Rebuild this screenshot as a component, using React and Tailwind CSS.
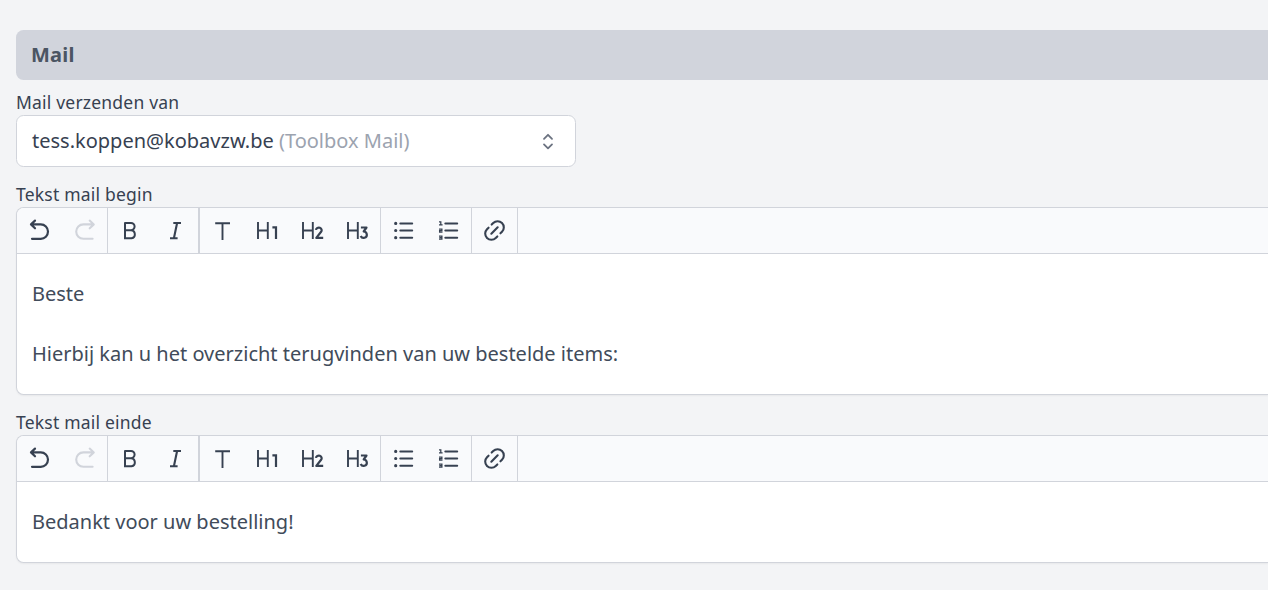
import React from "react";

const icons = {
  undo: (
    <path strokeWidth="2.2" d="M18 12.6 L14 16.4 L18 20.3 M14.2 16.4 H23.8 A7.2 7.2 0 0 1 23.8 30.8 H15" />
  ),
  redo: (
    <path strokeWidth="2.1" d="M27.7 12.6 L31.8 16.4 L27.7 20.3 M31.6 16.4 H21.4 A7.2 7.2 0 0 0 21.4 30.8 H30.6" />
  ),
  bold: (
    <path strokeWidth="2" strokeLinejoin="miter" d="M17 15 H23 A3.6 3.6 0 0 1 23 22.2 H17 M23 22.2 A4.1 4.1 0 0 1 23.6 30.3 H17 V15" />
  ),
  italic: (
    <path strokeWidth="2.1" strokeLinecap="butt" d="M20.3 15 H28 M17 30.2 H24.6 M24.1 15 L20.9 30.2" />
  ),
  text: <path strokeWidth="1.9" strokeLinecap="butt" d="M15.2 15.2 H30 M22.5 15.2 V32" />,
  h1: (
    <>
      <path strokeWidth="1.9" strokeLinecap="butt" d="M13 14 V31 M22.8 14 V31 M13 22.5 H22.8" />
      <path strokeWidth="2.2" strokeLinecap="butt" strokeLinejoin="miter" d="M27.4 19.4 H31 V31" />
    </>
  ),
  h2: (
    <>
      <path strokeWidth="1.9" strokeLinecap="butt" d="M13 14 V31 M22.8 14 V31 M13 22.5 H22.8" />
      <path strokeWidth="2.2" strokeLinecap="butt" d="M25.9 21.9 A2.9 2.6 0 1 1 31.1 23.8 L26.3 29.9 H33.2" />
    </>
  ),
  h3: (
    <>
      <path strokeWidth="1.9" strokeLinecap="butt" d="M13 14 V31 M22.8 14 V31 M13 22.5 H22.8" />
      <path strokeWidth="2.2" strokeLinecap="butt" d="M25.9 19.5 H31.5 L28.7 23.5 A3.2 3.2 0 1 1 25.7 28" />
    </>
  ),
  bullets: (
    <>
      <path strokeWidth="2" d="M19.3 15.4 H31.2 M19.3 22.5 H31.2 M19.3 29.7 H31.2" />
      <path strokeWidth="3.2" d="M14.7 15.4 h.01 M14.7 22.5 h.01 M14.7 29.7 h.01" />
    </>
  ),
  numbers: (
    <>
      <path strokeWidth="2" d="M19.3 15.4 H31.2 M19.3 22.5 H31.2 M19.3 29.7 H31.2" />
      <path
        strokeWidth="1.25"
        strokeLinecap="butt"
        strokeLinejoin="miter"
        d="M13 13.9 H14.8 V16.8 M13 16.8 H16.6 M13 21 H15.9 V22.5 H13.6 V24 H16.5 M13 28.2 H15.9 V31.2 H13 M13.3 29.7 H15.9"
      />
    </>
  ),
  link: (
    <g transform="translate(22.5 22.5) rotate(-45)" strokeWidth="2.1">
      <path d="M-4.5 0 H4.5 M2.2 -6.2 H4.4 A6.2 6.2 0 0 1 4.4 6.2 H2.2 M-2.2 -6.2 H-4.4 A6.2 6.2 0 0 0 -4.4 6.2 H-2.2" />
    </g>
  ),
};

function ToolButton({ icon, label, disabled }) {
  return (
    <button
      type="button"
      aria-label={label}
      disabled={disabled}
      className={`size-[45px] shrink-0 ${disabled ? "text-[#d1d4db]" : "text-[#374151]"}`}
    >
      <svg
        viewBox="0 0 45 45"
        className="block size-[45px]"
        fill="none"
        stroke="currentColor"
        strokeLinecap="round"
        strokeLinejoin="round"
      >
        {icons[icon]}
      </svg>
    </button>
  );
}

function Toolbar() {
  return (
    <div className="flex h-[46px] rounded-tl-[7px] border-b border-[#d1d4db] bg-[#f9fafc]">
      <div className="flex border-r border-[#d1d4db]">
        <ToolButton icon="undo" label="Ongedaan maken" />
        <ToolButton icon="redo" label="Opnieuw" disabled />
      </div>
      <div className="flex border-r border-[#d1d4db]">
        <ToolButton icon="bold" label="Vet" />
        <ToolButton icon="italic" label="Cursief" />
      </div>
      <div className="flex border-x border-[#d1d4db]">
        <ToolButton icon="text" label="Tekst" />
        <ToolButton icon="h1" label="Kop 1" />
        <ToolButton icon="h2" label="Kop 2" />
        <ToolButton icon="h3" label="Kop 3" />
      </div>
      <div className="flex border-r border-[#d1d4db]">
        <ToolButton icon="bullets" label="Lijst" />
        <ToolButton icon="numbers" label="Genummerde lijst" />
      </div>
      <div className="flex border-r border-[#d1d4db]">
        <ToolButton icon="link" label="Link" />
      </div>
    </div>
  );
}

function Label({ children }) {
  return (
    <div className="h-[25px] text-[17.5px] leading-[25px] tracking-[0.2px] text-[#374151]">{children}</div>
  );
}

function Editor({ label, paragraphs }) {
  return (
    <div>
      <Label>{label}</Label>
      <div className="rounded-l-[7.5px] border border-r-0 border-[#d1d4db] bg-white shadow-xs">
        <Toolbar />
        <div className="flex flex-col gap-[30px] px-[15px] pt-[25px] pb-[25px] text-[20px] leading-[30px] text-[#414b5a]">
          {paragraphs.map((p) => (
            <p key={p}>{p}</p>
          ))}
        </div>
      </div>
    </div>
  );
}

export default function App() {
  return (
    <div className="h-[590px] overflow-hidden bg-[#f3f4f6] pt-[30px] pl-4 font-['Noto_Sans',sans-serif]">
      <div className="flex h-[50px] items-center rounded-l-[7.5px] bg-[#d1d4dc] pl-[15px] text-[20px] leading-[30px] font-bold tracking-[0.25px] text-[#4b5563]">
        Mail
      </div>
      <div className="mt-[10px] flex flex-col gap-[15px]">
        <div>
          <Label>Mail verzenden van</Label>
          <button
            type="button"
            className="flex h-[52px] w-[560px] items-center justify-between rounded-[7.5px] border border-[#d1d4db] bg-white pr-[21.5px] pl-[15px] text-[20px] leading-[30px] text-[#374151]"
          >
            <span>
              tess.koppen@kobavzw.be <span className="text-[#9ca3af]">(Toolbox Mail)</span>
            </span>
            <svg
              viewBox="0 0 12 20"
              className="h-5 w-3 text-[#6b7280]"
              fill="none"
              stroke="currentColor"
              strokeWidth="1.8"
              strokeLinecap="round"
              strokeLinejoin="round"
            >
              <path d="M2 7.8 L6 3.8 L10 7.8 M2 13.4 L6 17.4 L10 13.4" />
            </svg>
          </button>
        </div>
        <Editor
          label="Tekst mail begin"
          paragraphs={["Beste", "Hierbij kan u het overzicht terugvinden van uw bestelde items:"]}
        />
        <Editor label="Tekst mail einde" paragraphs={["Bedankt voor uw bestelling!"]} />
      </div>
    </div>
  );
}
